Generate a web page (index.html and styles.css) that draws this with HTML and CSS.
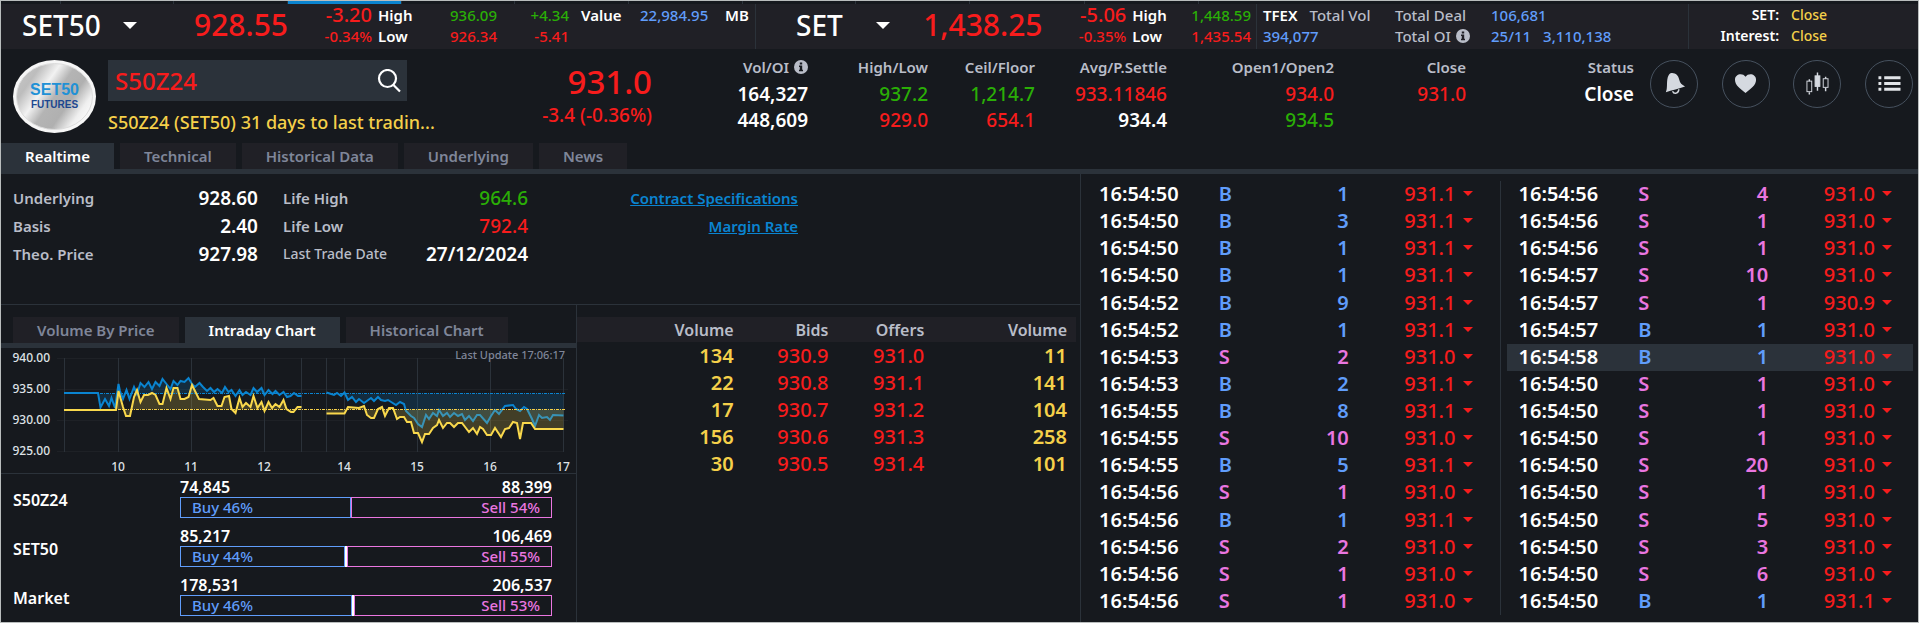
FILE: index.html
```html
<!DOCTYPE html>
<html lang="en">
<head>
<meta charset="utf-8">
<title>S50Z24 - Realtime</title>
<link rel="stylesheet" href="styles.css">
</head>
<body>
<div class="page">
  <div class="strip"><i></i><i></i><i></i><i class="strip-active"></i><i></i><i></i><i></i><i></i><i></i><i></i><i></i></div>

  <header class="market">
    <section class="index index-a">
      <label class="picker"><select aria-label="First index"><option>SET50</option><option>SET</option></select><span class="caret"></span></label>
      <strong class="index-price down">928.55</strong>
      <span class="num chg down">-3.20</span><span class="tag">High</span><span class="num up">936.09</span><span class="num up">+4.34</span><span class="tag value-tag">Value</span><span class="blue">22,984.95</span><span class="tag">MB</span>
      <span class="num down">-0.34%</span><span class="tag">Low</span><span class="num down">926.34</span><span class="num down">-5.41</span>
    </section>
    <section class="index index-b">
      <label class="picker"><select aria-label="Second index"><option>SET</option><option>SET50</option></select><span class="caret"></span></label>
      <strong class="index-price down">1,438.25</strong>
      <span class="num chg down">-5.06</span><span class="tag">High</span><span class="num up">1,448.59</span>
      <span class="num down">-0.35%</span><span class="tag">Low</span><span class="num down">1,435.54</span>
    </section>
    <section class="totals">
      <span class="pair"><b class="tag">TFEX</b><span class="muted">Total Vol</span></span><span class="muted">Total Deal</span><span class="blue">106,681</span>
      <span class="blue">394,077</span><span class="muted with-info">Total OI <svg class="info" viewBox="0 0 14 14"><circle cx="7" cy="7" r="7" fill="#b9bdc8"/><path d="M5.8 2.6h2.4v2H5.8zM5 5.6h3.2v4.2H9v1.5H5V9.800h.8V7.100H5z" fill="#202026"/></svg></span><span class="pair blue"><span>25/11</span><span>3,110,138</span></span>
    </section>
    <section class="sessions">
      <span class="tag">SET:</span><span class="yellow">Close</span>
      <span class="tag">Interest:</span><span class="yellow">Close</span>
    </section>
  </header>

  <section class="quote">
    <svg class="logo" viewBox="0 0 83 73">
      <defs>
        <linearGradient id="metal" x1="0" y1="0.2" x2="1" y2="0.8"><stop offset="0" stop-color="#c4c4c4"/><stop offset="0.16" stop-color="#bdbdbd"/><stop offset="0.34" stop-color="#f2f2f2"/><stop offset="0.5" stop-color="#b4b4b4"/><stop offset="0.68" stop-color="#b0b0b0"/><stop offset="0.85" stop-color="#efefef"/><stop offset="1" stop-color="#fff"/></linearGradient>
      </defs>
      <ellipse cx="41.500" cy="36.500" rx="41.500" ry="36.500" fill="#f6f6f6"/>
      <ellipse cx="41.500" cy="36.500" rx="38" ry="33" fill="url(#metal)" stroke="#dcdcdc"/>
      <text x="41.500" y="35" text-anchor="middle" font-size="16" fill="#2191d6" class="logo-text">SET50</text>
      <text x="41.500" y="48" text-anchor="middle" font-size="10" fill="#1c478f" class="logo-text">FUTURES</text>
    </svg>
    <div class="symbol">
      <div class="search">
        <input type="text" value="S50Z24" aria-label="Symbol">
        <button type="button" aria-label="Search"><svg viewBox="0 0 24 24" fill="none" stroke="#fff" stroke-width="2.200"><circle cx="10.500" cy="9.500" r="8.500"/><path d="M16.500 16l6.500 6.500"/></svg></button>
      </div>
      <p class="notice">S50Z24 (SET50) 31 days to last tradin...</p>
    </div>
    <div class="last down"><strong>931.0</strong><span>-3.4 (-0.36%)</span></div>
    <dl class="stat"><dt>Vol/OI <svg class="info" viewBox="0 0 14 14"><circle cx="7" cy="7" r="7" fill="#b9bdc8"/><path d="M5.800 2.600h2.400v2H5.800zM5 5.600h3.200v4.200H9v1.500H5V9.800h.8V7.100H5z" fill="#16191e"/></svg></dt><dd>164,327</dd><dd>448,609</dd></dl>
    <dl class="stat"><dt>High/Low</dt><dd class="up">937.2</dd><dd class="down">929.0</dd></dl>
    <dl class="stat"><dt>Ceil/Floor</dt><dd class="up">1,214.7</dd><dd class="down">654.1</dd></dl>
    <dl class="stat"><dt>Avg/P.Settle</dt><dd class="down">933.11846</dd><dd>934.4</dd></dl>
    <dl class="stat"><dt>Open1/Open2</dt><dd class="down">934.0</dd><dd class="up">934.5</dd></dl>
    <dl class="stat"><dt>Close</dt><dd class="down">931.0</dd></dl>
    <dl class="stat"><dt>Status</dt><dd>Close</dd></dl>
    <div class="actions">
      <button type="button" aria-label="Alerts"><svg viewBox="0 0 48 48"><path d="M17.500 17c1-3.500 3-5 4.500-4.500 4 .2 6.500 2.500 7.500 7 .8 3.500 2.500 5 6 7-6 2-14 4-20 6 2-4 .5-10 2-15.500z" fill="#d5d9e0"/><path d="M22.500 31.500c1.500 3.500 6.500 2.500 6.500-2" fill="none" stroke="#d5d9e0" stroke-width="1.500"/></svg></button>
      <button type="button" aria-label="Favourite"><svg viewBox="0 0 48 48"><path d="M23.500 33.500c-5-4.500-11-8-11-14 0-6 8-7.500 11-3 3-4.500 11-3 11 3 0 6-6 9.500-11 14z" fill="#d5d9e0"/></svg></button>
      <button type="button" aria-label="Chart"><svg viewBox="0 0 48 48" fill="none" stroke="#d5d9e0"><path d="M16 19v2M16 32.500v2.500M24.500 12v4M24.500 26v5M33 16.500v2M33 28v3.500" stroke-width="1.500"/><rect x="13.500" y="21" width="5" height="11"/><rect x="22" y="15.500" width="5" height="11" fill="#d5d9e0"/><rect x="30.500" y="18.500" width="5" height="9"/></svg></button>
      <button type="button" aria-label="Menu"><svg viewBox="0 0 48 48" fill="#e2e5e9"><path d="M13 16h3v3h-3zM19 16h17v3H19zM13 22h3v3h-3zM19 22h17v3H19zM13 28h3v3h-3zM19 28h17v3H19z"/></svg></button>
    </div>
  </section>

  <nav class="tabs main-tabs">
    <button type="button" class="active">Realtime</button><button type="button">Technical</button><button type="button">Historical Data</button><button type="button">Underlying</button><button type="button">News</button>
  </nav>

  <main class="content">
    <div class="left">
      <section class="facts">
        <dl>
          <dt>Underlying</dt><dd>928.60</dd><dt>Life High</dt><dd class="up">964.6</dd>
          <dt>Basis</dt><dd>2.40</dd><dt>Life Low</dt><dd class="down">792.4</dd>
          <dt>Theo. Price</dt><dd>927.98</dd><dt class="small">Last Trade Date</dt><dd>27/12/2024</dd>
        </dl>
        <div class="links"><a href="#">Contract Specifications</a><a href="#">Margin Rate</a></div>
      </section>

      <div class="lower">
        <section class="chart-pane">
          <nav class="tabs chart-tabs">
            <button type="button">Volume By Price</button><button type="button" class="active">Intraday Chart</button><button type="button">Historical Chart</button>
          </nav>
          <svg class="chart" viewBox="1 348 575 125" role="img" aria-label="Intraday chart">
            <path d="M57 358.500H563M57 389.500H568M57 420.500H568M57 451.500H563" stroke="#1e2126"/>
            <path d="M64.500 358V452M118.500 358V452M191.500 358V452M264.500 358V452M301.500 358V452M326.500 358V452M344.500 358V452M417.500 358V452M490.500 358V452M563.500 358V452" stroke="#2b323a"/>
            <path fill="#0a84d0" fill-opacity=".18" d="M64 393.500V393H98L100.500 407.500 105 399 109 406 111.500 398 115 408 118.500 384 120 391 123 399 126.500 390 129.500 399 134 387 137 394 140.500 383 144.500 387 148.500 382 152 389 155.500 382 159.500 386 162.500 379 166.500 384 170.500 389 173.500 381 177.500 385 180.500 381 184.500 382 188.500 378 192 384 195 387 199.500 383 203 387 207 391 210.500 388 214 392 217.500 389 222 393 225 387 228.500 392 231.500 390 235.500 396 239.500 390 242.500 395 246 392 250.500 395 253.500 388 257 392 261.500 388 264.500 395 268.500 390 272.500 394 275.500 391 279.500 395 283.500 392 287 397 290.500 396 294 393 298 396 301.500 396V393.500zM326.500 393.500V392.500L334 395 337 393 341 396 344.500 392.500 348 400 352 397 356 402 359 399 364 403 371 398 374 401 378 397 381 400 385 401 388 400 396 405 400 402 404 404 406 411 411 416 414 418 418 424 422 427 426 415 429 419 433 413 437 416 439 410 443 416 447 413 450 417 454 413 458 416 462 414 465 420 469 416 473 421 477 415 480 415 487 423 491 416 495 410 499 414 505 406 513 405 516 409 520 411 524 407 527 409 532 419 535 426 539 415 542 418 547 417 550 420 553 415 563.500 415.500V393.500z"/>
            <g fill="none" stroke="#0a84d0" stroke-width="2">
              <path d="M64 393H98L100.500 407.500 105 399 109 406 111.500 398 115 408 118.500 384 120 391 123 399 126.500 390 129.500 399 134 387 137 394 140.500 383 144.500 387 148.500 382 152 389 155.500 382 159.500 386 162.500 379 166.500 384 170.500 389 173.500 381 177.500 385 180.500 381 184.500 382 188.500 378 192 384 195 387 199.500 383 203 387 207 391 210.500 388 214 392 217.500 389 222 393 225 387 228.500 392 231.500 390 235.500 396 239.500 390 242.500 395 246 392 250.500 395 253.500 388 257 392 261.500 388 264.500 395 268.500 390 272.500 394 275.500 391 279.500 395 283.500 392 287 397 290.500 396 294 393 298 396 301.500 396"/>
              <path d="M326.500 392.500L334 395 337 393 341 396 344.500 392.500 348 400 352 397 356 402 359 399 364 403 371 398 374 401 378 397 381 400 385 401 388 400 396 405 400 402 404 404 406 411 411 416 414 418 418 424 422 427 426 415 429 419 433 413 437 416 439 410 443 416 447 413 450 417 454 413 458 416 462 414 465 420 469 416 473 421 477 415 480 415 487 423 491 416 495 410 499 414 505 406 513 405 516 409 520 411 524 407 527 409 532 419 535 426 539 415 542 418 547 417 550 420 553 415 563.500 415.500"/>
            </g>
            <path fill="#f5d04a" fill-opacity=".2" d="M64 409.500H116L118.500 391 123 407 126 416 130 416 134 397 137 390 140.500 402 144 395 148 395 152 393 155.500 395 159.500 404 162.500 404 166.500 388 170.500 399 173.500 388 177.500 388 180.500 399 184.500 399 188.500 397 192 385 199 399 210.500 400 213.500 398 217.500 406 221.500 406 224.500 397 229 396 231.500 409 235.500 413 239.500 398 242.500 407 246 403 250.500 407 253.500 396 257.500 408 261.500 402 264.500 411 268.500 402 272 408 275.500 404 279.500 407 283.500 400 286.500 409 291 412 293.500 412 297.500 407 301.500 407V409.500zM326.500 409.500V413.500H344.500L348 407 359 408 364 406 367 415 371 418 374 418 378 409 382 407 385 416 389 408 393 408 397 419 400 417 404 417 407 422 411 422 414 433 418 433 422 442 425 434 429 434 433 428 437 425 439 420 443 428 447 423 450 423 454 427 458 423 462 423 469 432 473 428 477 434 480 427 483 429 487 435 491 435 495 428 501 437 505 429 509 428 513 422 517 423 520 439 523 423 531 423 535 429 563.500 429V409.500z"/>
            <path d="M64 393.500H565" stroke="#0a84d0" stroke-dasharray="3 1 1 1"/>
            <path d="M64 409.500H565" stroke="#f5d04a" stroke-dasharray="3 1 1 1"/>
            <g fill="none" stroke="#f9d84c" stroke-width="2">
              <path d="M64 410H116L118.500 391 123 407 126 416 130 416 134 397 137 390 140.500 402 144 395 148 395 152 393 155.500 395 159.500 404 162.500 404 166.500 388 170.500 399 173.500 388 177.500 388 180.500 399 184.500 399 188.500 397 192 385 199 399 210.500 400 213.500 398 217.500 406 221.500 406 224.500 397 229 396 231.500 409 235.500 413 239.500 398 242.500 407 246 403 250.500 407 253.500 396 257.500 408 261.500 402 264.500 411 268.500 402 272 408 275.500 404 279.500 407 283.500 400 286.500 409 291 412 293.500 412 297.500 407 301.500 407"/>
              <path d="M326.500 413.500H344.500L348 407 359 408 364 406 367 415 371 418 374 418 378 409 382 407 385 416 389 408 393 408 397 419 400 417 404 417 407 422 411 422 414 433 418 433 422 442 425 434 429 434 433 428 437 425 439 420 443 428 447 423 450 423 454 427 458 423 462 423 469 432 473 428 477 434 480 427 483 429 487 435 491 435 495 428 501 437 505 429 509 428 513 422 517 423 520 439 523 423 531 423 535 429 563.500 429"/>
            </g>
            <g class="axis" text-anchor="end"><text x="50" y="362">940.00</text><text x="50" y="393">935.00</text><text x="50" y="424">930.00</text><text x="50" y="455">925.00</text></g>
            <g class="axis" text-anchor="middle"><text x="118" y="471">10</text><text x="191" y="471">11</text><text x="264" y="471">12</text><text x="344" y="471">14</text><text x="417" y="471">15</text><text x="490" y="471">16</text><text x="563" y="471">17</text></g>
            <text class="updated" x="565" y="359" text-anchor="end">Last Update 17:06:17</text>
          </svg>
          <div class="flows">
            <div class="flow"><span class="flow-name">S50Z24</span><div class="flow-data"><div class="flow-nums"><span>74,845</span><span>88,399</span></div><div class="bar"><span class="buy" style="width:46%">Buy 46%</span><span class="sell" style="width:54%">Sell 54%</span></div></div></div>
            <div class="flow"><span class="flow-name">SET50</span><div class="flow-data"><div class="flow-nums"><span>85,217</span><span>106,469</span></div><div class="bar"><span class="buy" style="width:44.4%">Buy 44%</span><span class="sell" style="width:55%">Sell 55%</span></div></div></div>
            <div class="flow"><span class="flow-name">Market</span><div class="flow-data"><div class="flow-nums"><span>178,531</span><span>206,537</span></div><div class="bar"><span class="buy" style="width:46.2%">Buy 46%</span><span class="sell" style="width:53.2%">Sell 53%</span></div></div></div>
          </div>
        </section>

        <section class="book-pane">
          <table class="book">
            <colgroup><col class="c1"><col class="c2"><col class="c3"><col class="c4"></colgroup>
            <thead><tr><th>Volume</th><th>Bids</th><th>Offers</th><th>Volume</th></tr></thead>
            <tbody>
              <tr><td>134</td><td>930.9</td><td>931.0</td><td>11</td></tr>
              <tr><td>22</td><td>930.8</td><td>931.1</td><td>141</td></tr>
              <tr><td>17</td><td>930.7</td><td>931.2</td><td>104</td></tr>
              <tr><td>156</td><td>930.6</td><td>931.3</td><td>258</td></tr>
              <tr><td>30</td><td>930.5</td><td>931.4</td><td>101</td></tr>
            </tbody>
          </table>
        </section>
      </div>
    </div>

    <section class="trades">
      <table class="ticks">
        <colgroup><col class="t1"><col class="t2"><col class="t3"><col class="t4"></colgroup>
        <tr class="b"><td>16:54:50</td><td>B</td><td>1</td><td>931.1</td></tr>
        <tr class="b"><td>16:54:50</td><td>B</td><td>3</td><td>931.1</td></tr>
        <tr class="b"><td>16:54:50</td><td>B</td><td>1</td><td>931.1</td></tr>
        <tr class="b"><td>16:54:50</td><td>B</td><td>1</td><td>931.1</td></tr>
        <tr class="b"><td>16:54:52</td><td>B</td><td>9</td><td>931.1</td></tr>
        <tr class="b"><td>16:54:52</td><td>B</td><td>1</td><td>931.1</td></tr>
        <tr class="s"><td>16:54:53</td><td>S</td><td>2</td><td>931.0</td></tr>
        <tr class="b"><td>16:54:53</td><td>B</td><td>2</td><td>931.1</td></tr>
        <tr class="b"><td>16:54:55</td><td>B</td><td>8</td><td>931.1</td></tr>
        <tr class="s"><td>16:54:55</td><td>S</td><td>10</td><td>931.0</td></tr>
        <tr class="b"><td>16:54:55</td><td>B</td><td>5</td><td>931.1</td></tr>
        <tr class="s"><td>16:54:56</td><td>S</td><td>1</td><td>931.0</td></tr>
        <tr class="b"><td>16:54:56</td><td>B</td><td>1</td><td>931.1</td></tr>
        <tr class="s"><td>16:54:56</td><td>S</td><td>2</td><td>931.0</td></tr>
        <tr class="s"><td>16:54:56</td><td>S</td><td>1</td><td>931.0</td></tr>
        <tr class="s"><td>16:54:56</td><td>S</td><td>1</td><td>931.0</td></tr>
      </table>
      <div class="rule"></div>
      <table class="ticks">
        <colgroup><col class="t1"><col class="t2"><col class="t3"><col class="t4"></colgroup>
        <tr class="s"><td>16:54:56</td><td>S</td><td>4</td><td>931.0</td></tr>
        <tr class="s"><td>16:54:56</td><td>S</td><td>1</td><td>931.0</td></tr>
        <tr class="s"><td>16:54:56</td><td>S</td><td>1</td><td>931.0</td></tr>
        <tr class="s"><td>16:54:57</td><td>S</td><td>10</td><td>931.0</td></tr>
        <tr class="s"><td>16:54:57</td><td>S</td><td>1</td><td>930.9</td></tr>
        <tr class="b"><td>16:54:57</td><td>B</td><td>1</td><td>931.0</td></tr>
        <tr class="b latest"><td>16:54:58</td><td>B</td><td>1</td><td>931.0</td></tr>
        <tr class="s"><td>16:54:50</td><td>S</td><td>1</td><td>931.0</td></tr>
        <tr class="s"><td>16:54:50</td><td>S</td><td>1</td><td>931.0</td></tr>
        <tr class="s"><td>16:54:50</td><td>S</td><td>1</td><td>931.0</td></tr>
        <tr class="s"><td>16:54:50</td><td>S</td><td>20</td><td>931.0</td></tr>
        <tr class="s"><td>16:54:50</td><td>S</td><td>1</td><td>931.0</td></tr>
        <tr class="s"><td>16:54:50</td><td>S</td><td>5</td><td>931.0</td></tr>
        <tr class="s"><td>16:54:50</td><td>S</td><td>3</td><td>931.0</td></tr>
        <tr class="s"><td>16:54:50</td><td>S</td><td>6</td><td>931.0</td></tr>
        <tr class="b"><td>16:54:50</td><td>B</td><td>1</td><td>931.1</td></tr>
      </table>
    </section>
  </main>
</div>
</body>
</html>
```
FILE: styles.css
```css
:root {
  --bg: #16191e;
  --panel: #202026;
  --slate: #2b323a;
  --red: #f71c1c;
  --green: #2aae06;
  --blue: #609dfb;
  --pink: #ea76e0;
  --yellow: #f5d04a;
  --muted: #b9bdc8;
  --tab: #7f8699;
}

* { box-sizing: border-box; }

body {
  margin: 0;
  background: var(--bg);
  color: #fff;
  font: 600 15px/20px "Noto Sans", sans-serif;
}

button, input, select {
  font: inherit;
  color: inherit;
  background: none;
  border: 0;
  padding: 0;
  margin: 0;
}

dl, dd, dt, p { margin: 0; }

.page {
  display: flex;
  flex-direction: column;
  min-height: 100vh;
  border: 1px solid #b9bdbd;
}

.up { color: var(--green); }
.down { color: var(--red); }
.blue { color: var(--blue); }
.yellow { color: var(--yellow); }
.muted { color: var(--muted); }
.info { width: 14px; height: 14px; flex: none; }

/* Strip above the market bar */
.strip {
  display: grid;
  grid-template-columns: 60fr 113fr 114fr 114fr 113fr 114fr 114fr 113fr 114fr 115fr 114fr 719fr;
  height: 3px;
}
.strip i { border-right: 1px solid var(--slate); }
.strip-active { background: #0a84d0; }

/* Market bar */
.market {
  display: grid;
  grid-template-columns: 755fr 501fr 432fr 229fr;
  background: var(--panel);
  font-weight: 500;
  white-space: nowrap;
}
.market > section {
  display: grid;
  grid-template-rows: 21px 21px;
  align-items: center;
  padding-bottom: 3px;
  border-right: 1px solid var(--slate);
}
.market > section:last-child { border-right: 0; }
.market .index-a {
  grid-template-columns: 122fr 144fr 84fr 52fr 73fr 72fr 71fr 79fr 36fr;
  padding-left: 21px;
}
.market .index-b {
  grid-template-columns: 98fr 149fr 84fr 54fr 71fr 5fr;
  padding-left: 40px;
}
.picker, .index-price { grid-row: 1 / 3; }
.picker { position: relative; justify-self: start; width: 94px; }
.index-a .picker { width: 115px; }
.picker select { appearance: none; width: 100%; font-size: 28px; line-height: 36px; font-weight: 500; }
.caret {
  position: absolute;
  right: 0;
  top: 15px;
  border: 7px solid transparent;
  border-top: 7px solid #fff;
  border-bottom: 0;
  pointer-events: none;
}
.index-price { font-size: 30px; line-height: 36px; font-weight: 500; text-align: right; }
.num { text-align: right; }
.chg { font-size: 20px; }
.market .tag { font-weight: 600; }
.index .tag { padding-left: 6px; }
.index .value-tag { padding-left: 12px; }
.index-b > :nth-child(3), .index-b > :nth-child(6) { grid-column: 3; }
.index-b > :nth-child(4), .index-b > :nth-child(7) { grid-column: 4; }
.index-b > :nth-child(5), .index-b > :nth-child(8) { grid-column: 5; }
.market .totals { grid-template-columns: 132fr 96fr 197fr; padding-left: 6px; }
.pair { display: flex; gap: 12px; }
.with-info { display: flex; align-items: center; gap: 5px; }
.market .sessions { grid-template-columns: 90fr 127fr; column-gap: 12px; font-size: 14px; }
.sessions .tag { text-align: right; }

/* Quote header */
.quote {
  display: grid;
  grid-template-columns: 83fr 327fr 229fr 156fr 120fr 107fr 132fr 167fr 132fr 168fr 279fr;
  align-items: start;
  padding: 11px 5px 9px 12px;
  white-space: nowrap;
}
.logo { width: 100%; height: 73px; display: block; }
.logo-text { font-family: "Liberation Sans", sans-serif; font-weight: 700; }
.symbol { margin-left: 12px; min-width: 0; }
.search { display: flex; width: 95%; height: 41px; background: var(--slate); padding: 0 6px 0 7px; align-items: center; }
.search input { flex: 1; min-width: 0; font-size: 24px; font-weight: 500; color: var(--red); }
.search svg { width: 24px; height: 24px; display: block; }
.notice { margin-top: 9px; font-size: 18px; font-weight: 500; line-height: 24px; color: var(--yellow); }
.last { display: grid; text-align: right; font-size: 19px; font-weight: 500; line-height: 24px; }
.last strong { font-size: 33px; line-height: 43px; font-weight: 500; }
.stat { text-align: right; font-size: 19px; line-height: 26px; }
.stat dt { display: flex; justify-content: flex-end; align-items: center; gap: 5px; font-size: 15px; line-height: 14px; color: var(--muted); margin-bottom: 7px; }
.actions { display: flex; justify-content: space-between; padding-left: 16px; }
.actions button { width: 48px; height: 48px; border: 1px solid #46515e; border-radius: 50%; }
.actions svg { display: block; width: 46px; height: 46px; }
dd.up, dd.down { font-weight: 500; }

/* Tabs */
.tabs { display: flex; gap: 6px; border-bottom: 5px solid var(--slate); }
.tabs button { height: 26px; padding: 0 24px; background: var(--panel); color: var(--tab); font-size: 15px; white-space: nowrap; }
.tabs .active { background: var(--slate); color: #fff; }
.chart-tabs { padding-left: 12px; }

/* Body */
.content { flex: 1; display: grid; grid-template-columns: 1080fr 837fr; }
.left { display: flex; flex-direction: column; border-right: 1px solid var(--slate); }
.facts {
  display: grid;
  grid-template-columns: 527fr 270fr 282fr;
  padding: 10px 0 36px;
  border-bottom: 1px solid var(--slate);
  white-space: nowrap;
}
.facts dl { display: grid; grid-template-columns: 120fr 125fr 135fr 135fr; padding-left: 12px; line-height: 28px; align-items: center; }
.facts dt { color: var(--muted); font-size: 15px; }
.facts dt:nth-of-type(even) { padding-left: 25px; }
.facts dt.small { font-size: 14px; font-weight: 500; }
.facts dd { font-size: 19px; text-align: right; }
.links { display: flex; flex-direction: column; align-items: flex-end; line-height: 28px; }
.links a { color: #0a84d0; font-size: 15px; }

.lower { flex: 1; display: grid; grid-template-columns: 576fr 503fr; }
.chart-pane { border-right: 1px solid var(--slate); padding-top: 12px; }
.chart { display: block; width: 100%; height: auto; overflow: visible; border-bottom: 1px solid var(--slate); }
.axis { font-size: 12px; font-weight: 500; fill: #dfe2e6; }
.updated { font-size: 11px; font-weight: 500; fill: var(--tab); }

.flows { display: grid; gap: 9px; padding: 4px 24px 6px 12px; }
.flow { display: grid; grid-template-columns: 167fr 372fr; align-items: center; font-size: 16px; }
.flow-name { padding-top: 4px; }
.flow-nums { display: flex; justify-content: space-between; line-height: 19px; }
.bar { display: flex; height: 21px; background: #fff; font-size: 15px; font-weight: 500; line-height: 19px; justify-content: space-between; }
.bar span { background: var(--bg); border: 1px solid; padding: 0 11px; }
.buy { color: var(--blue); }
.sell { color: var(--pink); text-align: right; }

.book-pane { padding: 12px 4px 0 0; }
.book { width: 100%; table-layout: fixed; border-collapse: collapse; text-align: right; }
.book th { height: 25px; padding: 0; background: var(--panel); color: var(--muted); font-size: 16px; font-weight: 600; }
.book td { height: 27px; padding: 0; font-size: 20px; font-weight: 500; color: var(--red); }
.book td:first-child, .book td:last-child { color: var(--yellow); font-weight: 600; }
.book th:last-child, .book td:last-child { padding-right: 9px; }
.c1 { width: 31.4%; }
.c2 { width: 19%; }
.c3 { width: 19.2%; }

.trades { display: grid; grid-template-columns: 1fr 1px 1fr; column-gap: 6px; align-items: start; padding: 7px 5px 7px 6px; }
.rule { align-self: stretch; background: var(--slate); }
.ticks { width: 100%; height: 434px; table-layout: fixed; border-collapse: collapse; font-size: 20px; }
.ticks td { padding: 0 0 1px; }
.ticks td:first-child { padding-left: 12px; }
.ticks td:nth-child(3) { text-align: right; }
.ticks td:last-child { text-align: right; color: var(--red); font-weight: 500; padding-right: 21px; }
.ticks td:last-child::after {
  content: "";
  display: inline-block;
  margin-left: 7px;
  border: 5px solid transparent;
  border-top: 5px solid var(--red);
  border-bottom: 0;
  vertical-align: 5px;
}
.b { color: var(--blue); }
.s { color: var(--pink); }
.ticks td:first-child { color: #fff; }
.latest { background: var(--slate); }
.t1 { width: 32.4%; }
.t2 { width: 10%; }
.t3 { width: 22%; }
```
